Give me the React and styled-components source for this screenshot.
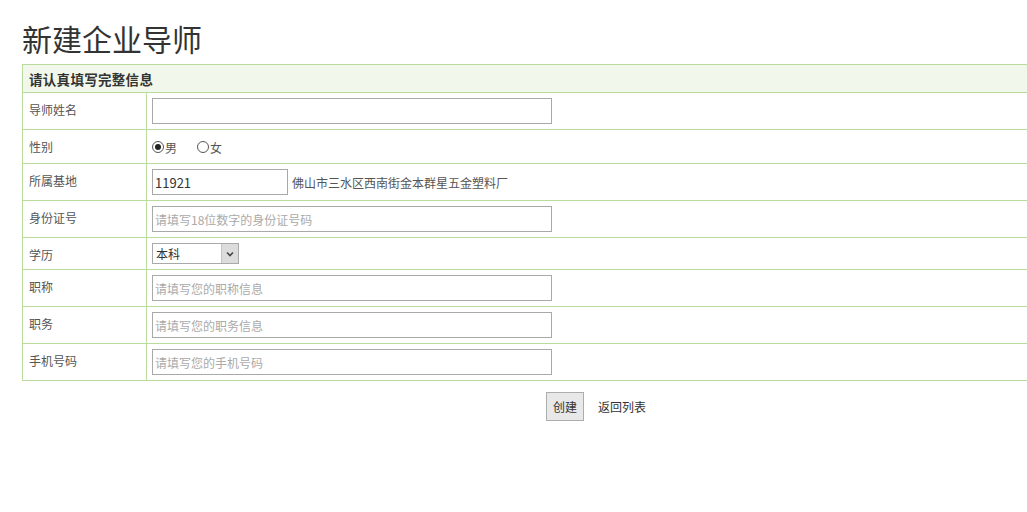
import React from "react";
import styled, { createGlobalStyle } from "styled-components";

const GlobalStyle = createGlobalStyle`
  html, body {
    margin: 0;
    padding: 0;
    overflow: hidden;
    background: #fff;
  }
  body {
    font-family: "Noto Sans CJK SC", "Noto Sans", sans-serif;
    font-size: 12px;
    color: #333;
  }
`;

const Page = styled.div`
  width: 1150px;
  padding: 0 0 40px 22px;
`;

const Title = styled.h1`
  margin: 0;
  padding-top: 18px;
  height: 46px;
  font-size: 30px;
  font-weight: normal;
  line-height: 40px;
  color: #333;
`;

const FormTable = styled.table`
  width: 100%;
  border-collapse: collapse;
  border: 1px solid #b9dc9c;
`;

const HeadCell = styled.th`
  height: 28px;
  box-sizing: border-box;
  padding: 0 6px;
  text-align: left;
  font-weight: bold;
  font-size: 13.5px;
  letter-spacing: 0.3px;
  color: #333;
  background: #f1f8eb;
  border: 1px solid #b9dc9c;
`;

const Label = styled.td`
  width: 111px;
  padding: 8px 6px 0;
  vertical-align: top;
  line-height: 18px;
  color: #555;
  border: 1px solid #b9dc9c;
`;

const Value = styled.td`
  padding: ${(p) => (p.$tight ? "4px 5px" : "5px 5px")};
  height: ${(p) => p.$h}px;
  box-sizing: border-box;
  vertical-align: middle;
  border: 1px solid #b9dc9c;
  color: #555;
`;

const TextInput = styled.input`
  display: inline-block;
  vertical-align: middle;
  box-sizing: border-box;
  width: ${(p) => p.$w || 400}px;
  height: 26px;
  margin: 0;
  padding: 0 2px;
  border: 1px solid #a9a9a9;
  font-family: "Noto Sans CJK SC", sans-serif;
  font-size: 13px;
  color: #333;
  outline: none;
  &::placeholder {
    font-size: 12px;
    color: #aaa;
  }
`;

const Address = styled.span`
  margin-left: 4px;
  font-size: 12px;
  color: #555;
  vertical-align: middle;
`;

const RadioGroup = styled.div`
  display: flex;
  align-items: center;
  height: 24px;
  gap: 20px;
  padding-top: 1px;
`;

const RadioLabel = styled.label`
  display: flex;
  align-items: center;
  font-size: 12px;
  color: #555;
`;

const Radio = styled.input`
  appearance: none;
  box-sizing: border-box;
  width: 12px;
  height: 12px;
  margin: 0 1px 0 0;
  border: 1px solid #555;
  border-radius: 50%;
  background: #fff;
  display: grid;
  place-items: center;
  &::after {
    content: "";
    width: 6px;
    height: 6px;
    border-radius: 50%;
    background: #222;
    transform: scale(0);
  }
  &:checked::after {
    transform: scale(1);
  }
`;

const SelectWrap = styled.div`
  position: relative;
  width: 87px;
  height: 21px;
`;

const Select = styled.select`
  appearance: none;
  box-sizing: border-box;
  width: 100%;
  height: 100%;
  margin: 0;
  padding: 0 0 0 3px;
  border: 1px solid #a9a9a9;
  background: #fff;
  font-family: "Noto Sans CJK SC", sans-serif;
  font-size: 12px;
  color: #333;
  outline: none;
`;

const Arrow = styled.span`
  position: absolute;
  top: 1px;
  right: 1px;
  bottom: 1px;
  width: 16px;
  background: #dcdcdc;
  border-left: 1px solid #c4c4c4;
  display: flex;
  align-items: center;
  justify-content: center;
  pointer-events: none;
`;

const Actions = styled.div`
  display: flex;
  justify-content: center;
  align-items: center;
  gap: 14px;
  margin-top: 11px;
  padding-right: 2px;
`;

const Button = styled.button`
  box-sizing: border-box;
  height: 29px;
  padding: 0 6px;
  border: 1px solid #adadad;
  background: #e8e8e8;
  font-family: "Noto Sans CJK SC", sans-serif;
  font-size: 12px;
  color: #333;
`;

const BackLink = styled.a`
  font-size: 12px;
  color: #333;
  text-decoration: none;
`;

const rows = [
  { label: "职称", placeholder: "请填写您的职称信息" },
  { label: "职务", placeholder: "请填写您的职务信息" },
  { label: "手机号码", placeholder: "请填写您的手机号码" },
];

const App = () => {
  return (
    <Page>
      <GlobalStyle />
      <Title>新建企业导师</Title>
      <FormTable>
        <tbody>
          <tr>
            <HeadCell colSpan={2}>请认真填写完整信息</HeadCell>
          </tr>
          <tr>
            <Label>导师姓名</Label>
            <Value $h={37}>
              <TextInput type="text" />
            </Value>
          </tr>
          <tr>
            <Label>性别</Label>
            <Value $h={34} $tight>
              <RadioGroup>
                <RadioLabel>
                  <Radio type="radio" name="sex" defaultChecked />男
                </RadioLabel>
                <RadioLabel>
                  <Radio type="radio" name="sex" />女
                </RadioLabel>
              </RadioGroup>
            </Value>
          </tr>
          <tr>
            <Label>所属基地</Label>
            <Value $h={37}>
              <TextInput type="text" $w={136} defaultValue="11921" />
              <Address>佛山市三水区西南街金本群星五金塑料厂</Address>
            </Value>
          </tr>
          <tr>
            <Label>身份证号</Label>
            <Value $h={37}>
              <TextInput type="text" placeholder="请填写18位数字的身份证号码" />
            </Value>
          </tr>
          <tr>
            <Label>学历</Label>
            <Value $h={32}>
              <SelectWrap>
                <Select defaultValue="本科">
                  <option>本科</option>
                  <option>硕士</option>
                  <option>博士</option>
                </Select>
                <Arrow>
                  <svg width="8" height="6" viewBox="0 0 8 6">
                    <path d="M1 1.5 L4 4.5 L7 1.5" fill="none" stroke="#444" strokeWidth="1.6" />
                  </svg>
                </Arrow>
              </SelectWrap>
            </Value>
          </tr>
          {rows.map((r) => (
            <tr key={r.label}>
              <Label>{r.label}</Label>
              <Value $h={37}>
                <TextInput type="text" placeholder={r.placeholder} />
              </Value>
            </tr>
          ))}
        </tbody>
      </FormTable>
      <Actions>
        <Button type="button">创建</Button>
        <BackLink href="#">返回列表</BackLink>
      </Actions>
    </Page>
  );
};

export default App;
